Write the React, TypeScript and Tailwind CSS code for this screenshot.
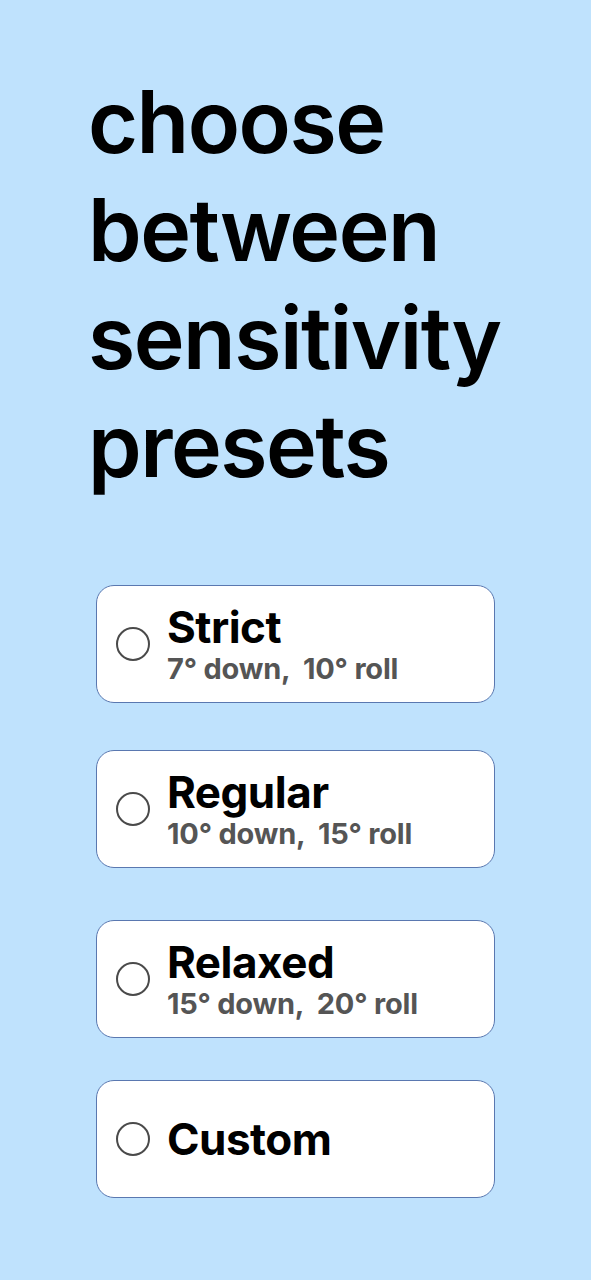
import { useState } from "react";

const PRESETS = [
  { name: "Strict", detail: "7° down,  10° roll", gap: "mt-0" },
  { name: "Regular", detail: "10° down,  15° roll", gap: "mt-[47px]" },
  { name: "Relaxed", detail: "15° down,  20° roll", gap: "mt-[52px]" },
  { name: "Custom", detail: "", gap: "mt-[42px]" },
];

export default function App() {
  const [selected, setSelected] = useState<string | null>(null);

  return (
    <div className="min-h-[1280px] w-full bg-[#bfe2fd] font-['Inter',sans-serif] text-black">
      <div className="pl-[88px] pt-[68px]">
        <h1 className="text-[86px] font-semibold leading-[108px] tracking-[-1.5px]">
          choose
          <br />
          between
          <br />
          sensitivity
          <br />
          presets
        </h1>
      </div>

      <ul className="mt-[85px] flex flex-col pl-[96px] pr-[96px]">
        {PRESETS.map(({ name, detail, gap }) => (
          <li key={name} className={gap}>
            <button
              type="button"
              onClick={() => setSelected(name)}
              className="flex h-[118px] w-full items-center gap-[17px] rounded-[18px] border border-[#5a78b0] bg-white pl-[19px] text-left"
            >
              <span className="flex h-[34px] w-[34px] shrink-0 items-center justify-center rounded-full border-2 border-[#4a4a4a]">
                {selected === name && <span className="h-[18px] w-[18px] rounded-full bg-[#4a4a4a]" />}
              </span>
              <span className="flex flex-col">
                <span className="text-[44px] font-bold leading-[50px] tracking-[-0.5px]">{name}</span>
                {detail && (
                  <span className="whitespace-pre text-[29px] font-bold leading-[34px] tracking-[-0.2px] text-[#555]">
                    {detail}
                  </span>
                )}
              </span>
            </button>
          </li>
        ))}
      </ul>
    </div>
  );
}
